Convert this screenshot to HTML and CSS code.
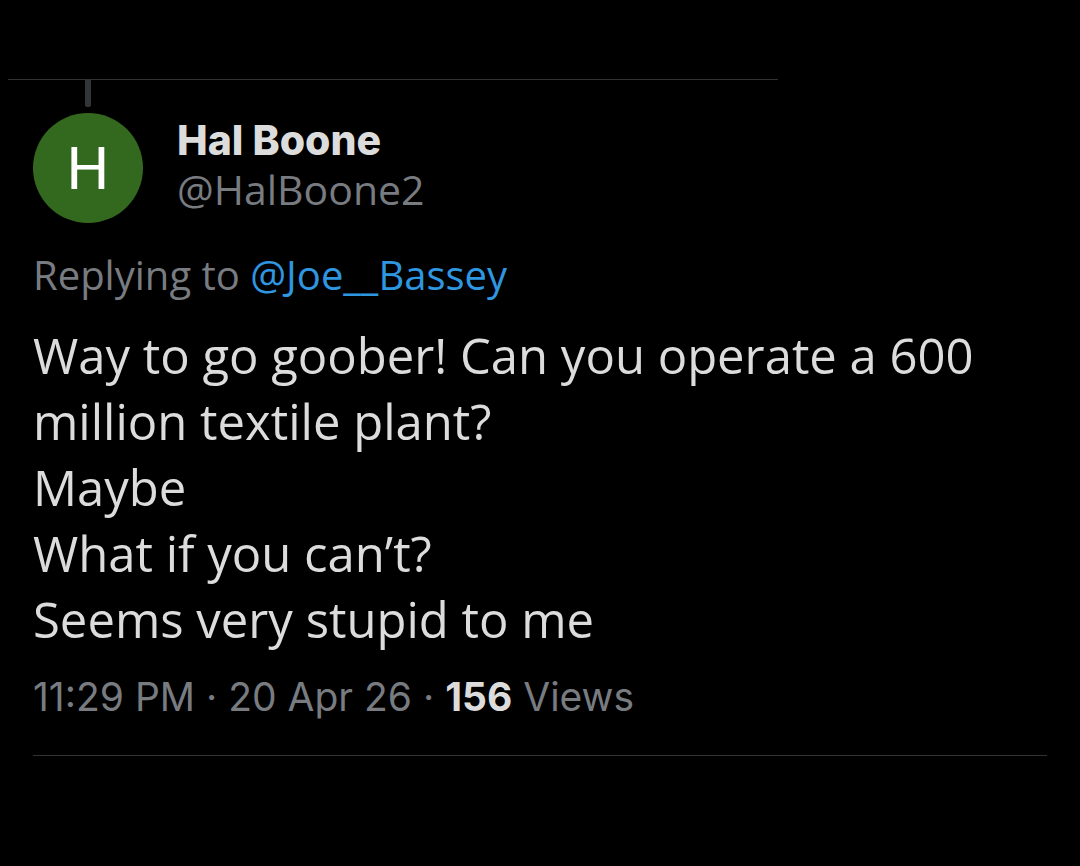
FILE: index.html
```html
<!DOCTYPE html>
<html lang="en">
<head>
  <meta charset="UTF-8">
  <meta name="viewport" content="width=device-width, initial-scale=1.0">
  <title>Hal Boone (@HalBoone2)</title>
  <link rel="stylesheet" href="styles.css">
</head>
<body>
  <main class="thread">
    <hr class="thread-divider">

    <article class="post">
      <div class="thread-line"></div>

      <header class="post-header">
        <div class="avatar">H</div>
        <div class="author">
          <h1 class="author-name">Hal Boone</h1>
          <span class="author-handle">@HalBoone2</span>
        </div>
      </header>

      <p class="reply-to">Replying to <a href="#">@Joe__Bassey</a></p>

      <p class="post-text">Way to go goober! Can you operate a 600 million textile plant?<br>
        Maybe<br>
        What if you can’t?<br>
        Seems very stupid to me</p>

      <p class="post-meta"><time>11:29 PM · 20 Apr 26</time> · <strong>156</strong> Views</p>
    </article>
  </main>
</body>
</html>
```

FILE: styles.css
```css
* {
  box-sizing: border-box;
}

body {
  margin: 0;
  background-color: #000;
  color: #dcdcdc;
  font-family: "Open Sans", "Noto Sans", sans-serif;
}

.thread {
  padding-top: 79px;
}

.thread-divider {
  width: 71.3%;
  height: 1px;
  margin: 0 0 0 8px;
  border: none;
  background-color: #2f3336;
}

.post {
  margin: 0 33px;
  border-bottom: 1px solid #2f3336;
}

/* Connects the avatar to the post above */
.thread-line {
  width: 6px;
  height: 27px;
  margin-left: 52px;
  border-radius: 0 0 2px 2px;
  background-color: #333639;
}

.post-header {
  display: flex;
  align-items: flex-start;
  gap: 34px;
  margin-top: 6px;
}

.avatar {
  display: flex;
  align-items: center;
  justify-content: center;
  width: 110px;
  height: 110px;
  border-radius: 50%;
  background-color: #33691e;
  color: #fff;
  font-family: Roboto, sans-serif;
  font-size: 60px;
}

.author {
  padding-top: 2px;
}

.author-name {
  margin: 0;
  font-family: Inter, sans-serif;
  font-size: 41px;
  font-weight: 800;
  line-height: 50px;
}

.author-handle {
  display: block;
  color: #787c81;
  font-size: 41px;
  line-height: 48px;
}

.reply-to {
  margin: 25px 0 0;
  color: #787c81;
  font-size: 40px;
  line-height: 54px;
}

.reply-to a {
  color: #2f96e0;
  text-decoration: none;
}

.post-text {
  margin: 20px 0 0;
  font-size: 49px;
  line-height: 66px;
}

.post-meta {
  margin: 18px 0 0;
  padding-bottom: 31px;
  color: #787c81;
  font-family: Inter, sans-serif;
  font-size: 39px;
  line-height: 54px;
}

.post-meta strong {
  color: #dcdcdc;
}
```
